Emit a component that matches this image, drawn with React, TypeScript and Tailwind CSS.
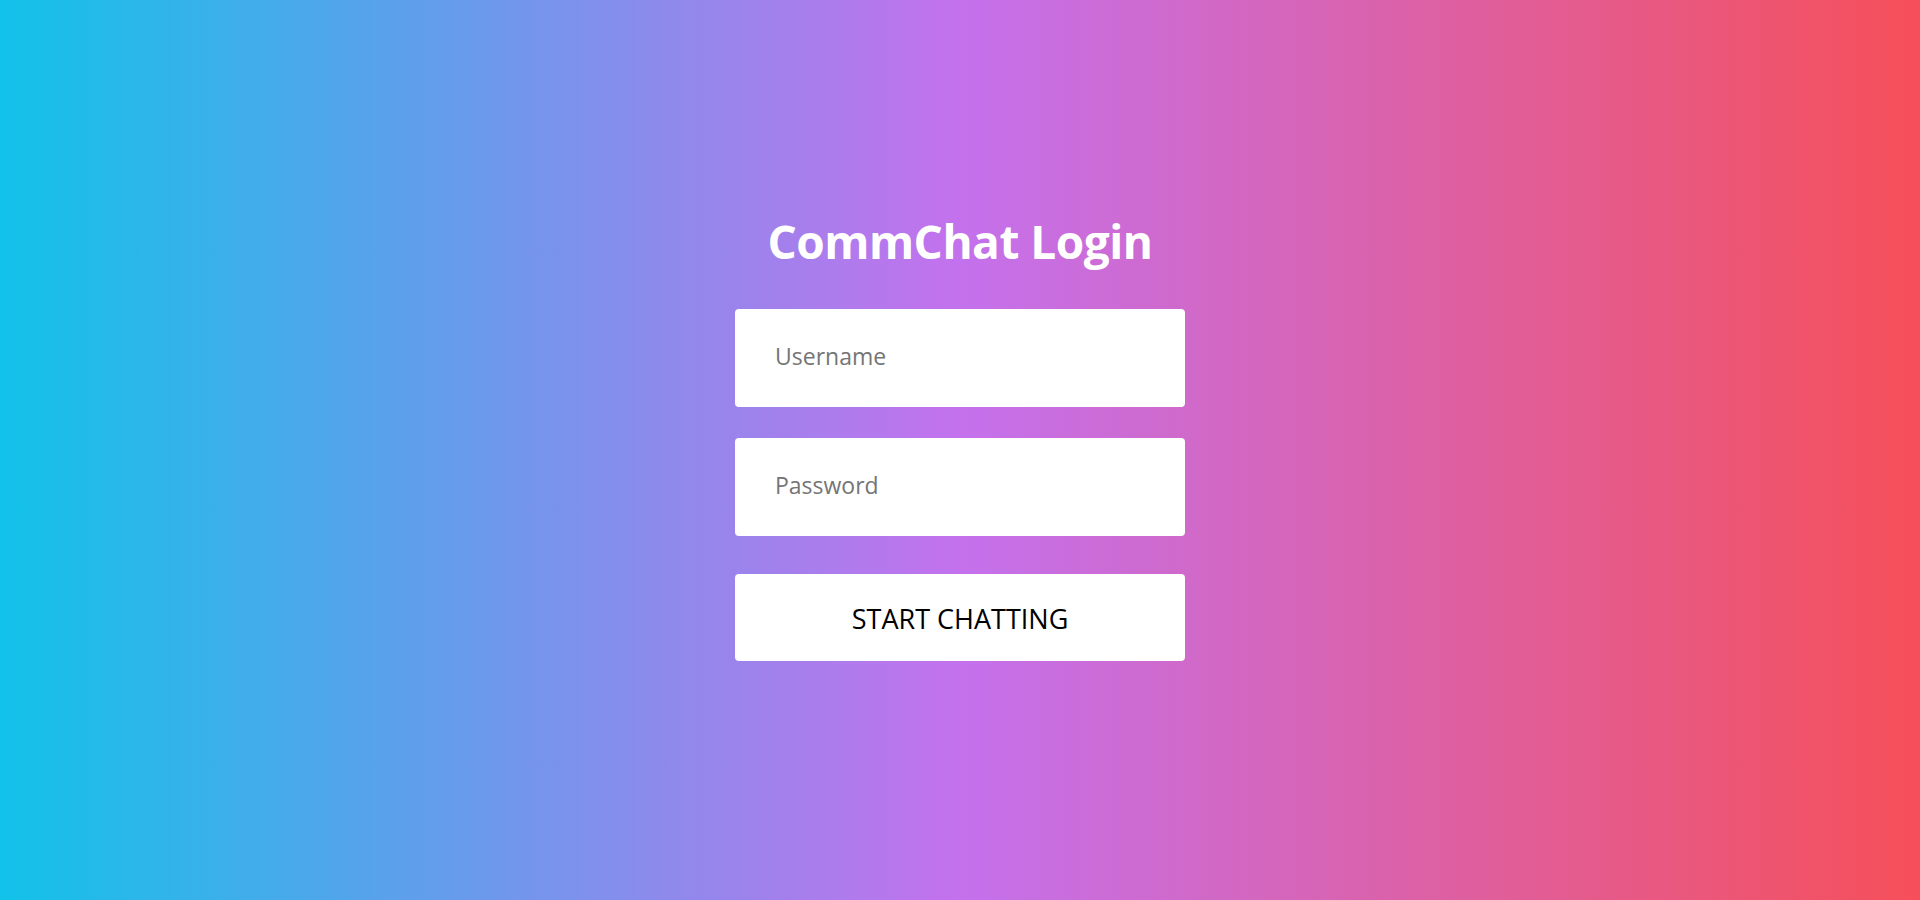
import React from "react";

export default function App() {
  return (
    <div
      className="w-full h-[900px] bg-[linear-gradient(to_right,#12c2e9,#c471ed,#f64f59)] flex flex-col items-center"
      style={{ fontFamily: '"Open Sans", "Noto Sans", sans-serif' }}
    >
      <h1 className="mt-[211px] text-[46px] leading-[60px] font-bold text-white tracking-[-0.5px]">
        CommChat Login
      </h1>
      <form className="mt-[38px] w-[450px] flex flex-col" onSubmit={(e) => e.preventDefault()}>
        <input
          type="text"
          placeholder="Username"
          className="h-[98px] w-full bg-white rounded-[4px] pl-[40px] pb-[4px] text-[23px] text-black placeholder:text-[#757575] outline-none"
        />
        <input
          type="password"
          placeholder="Password"
          className="mt-[31px] h-[98px] w-full bg-white rounded-[4px] pl-[40px] pb-[4px] text-[23px] text-black placeholder:text-[#757575] outline-none"
        />
        <button
          type="submit"
          className="mt-[38px] h-[87px] w-full bg-white rounded-[4px] pt-[4px] text-[27px] text-black"
        >
          START CHATTING
        </button>
      </form>
    </div>
  );
}
